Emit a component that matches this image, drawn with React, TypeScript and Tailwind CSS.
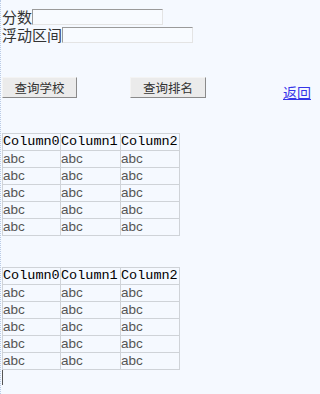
const cjk = "font-['Noto_Sans_CJK_SC',sans-serif]";

const columns = ["Column0", "Column1", "Column2"];
const widths = ["w-[58px]", "w-[60px]", "w-[59px]"];
const rows = [0, 1, 2, 3, 4];

function Field({ label }: { label: string }) {
  return (
    <div className="flex h-[18px] items-center">
      <span className={`${cjk} text-[15px] leading-[18px] text-[#333]`}>{label}</span>
      <input className="h-[16px] w-[131px] border border-t-[#9a9a9a] border-l-[#9a9a9a] border-r-[#e4e4e4] border-b-[#e4e4e4] bg-[#f8fbff] outline-none" />
    </div>
  );
}

function Grid() {
  return (
    <table className="border-collapse">
      <thead>
        <tr>
          {columns.map((c, i) => (
            <th
              key={c}
              className={`${widths[i]} h-[16px] border border-[#cfd3d8] p-0 text-left font-['Liberation_Mono',monospace] text-[13.5px] leading-[16px] font-normal text-black`}
            >
              {c}
            </th>
          ))}
        </tr>
      </thead>
      <tbody>
        {rows.map((r) => (
          <tr key={r}>
            {columns.map((c) => (
              <td
                key={c}
                className="h-[17px] border border-[#cfd3d8] p-0 font-['Liberation_Sans',Arial,sans-serif] text-[13.5px] leading-[16px] text-[#555]"
              >
                abc
              </td>
            ))}
          </tr>
        ))}
      </tbody>
    </table>
  );
}

export default function App() {
  const btn = `${cjk} h-[21px] border border-t-[#f4f4f4] border-l-[#f4f4f4] border-r-[#8a8a8a] border-b-[#8a8a8a] bg-[#ebebeb] text-[12.5px] leading-[19px] text-[#333]`;
  return (
    <div className="min-h-[394px] w-[320px] border-l border-dotted border-l-[#b9cbe6] bg-[#f5f9ff]">
      <div className="pl-[1px] pt-[8px]">
        <Field label="分数" />
        <Field label="浮动区间" />

        <div className="mt-[33px] flex items-start">
          <button className={`${btn} w-[75px]`}>查询学校</button>
          <button className={`${btn} ml-[53px] w-[76px]`}>查询排名</button>
          <a
            href="#"
            className={`${cjk} ml-[77px] mt-[6px] text-[14px] leading-[18px] text-[#3535e8] underline`}
          >
            返回
          </a>
        </div>

        <div className="mt-[32px]">
          <Grid />
        </div>
        <div className="mt-[31px]">
          <Grid />
        </div>
        <div className="h-[15px] w-px bg-[#555]" />
      </div>
    </div>
  );
}
